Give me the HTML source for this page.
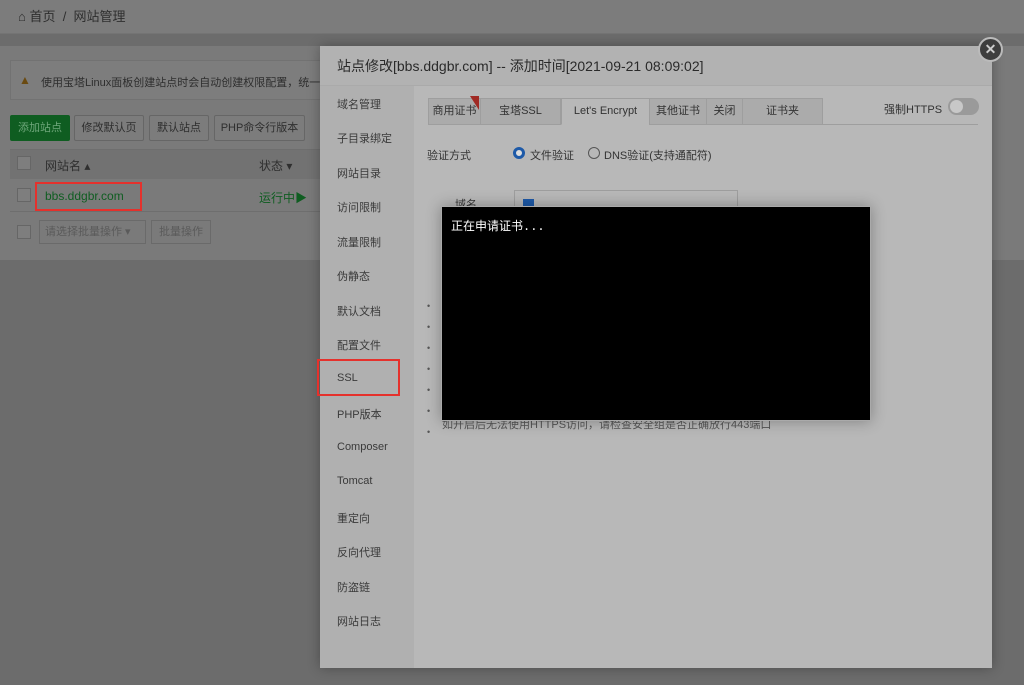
<!DOCTYPE html>
<html><head><meta charset="utf-8"><style>
*{margin:0;padding:0;box-sizing:border-box}
body{width:1024px;height:685px;background:#6c6c6c;font-family:"Liberation Sans","Noto Sans CJK SC",sans-serif;font-size:12px;color:#333;position:relative;overflow:hidden}
.a{position:absolute;white-space:nowrap}
.top{left:0;top:0;width:1024px;height:34px;background:#7c7c7c;border-bottom:1px solid #747474}
.panel{left:0;top:46px;width:1024px;height:214px;background:#7a7a7a}
.btn{position:absolute;top:115px;height:26px;border:1px solid #666;background:#7c7c7c;color:#2e2e2e;line-height:24px;text-align:center;border-radius:2px;font-size:11px}
.modal{left:320px;top:46px;width:672px;height:622px;background:#b8b8b8;box-shadow:0 0 12px rgba(0,0,0,.3)}
.hdr{left:0;top:0;width:672px;height:40px;background:#b2b2b2;font-size:14px;color:#2a2a2a;line-height:40px;padding-left:17px;border-bottom:1px solid #aaa}
.side{left:0;top:40px;width:94px;height:582px;background:#b0b0b0}
.side div{position:absolute;left:17px;color:#3a3a3a;font-size:11px}
.tab{position:absolute;top:52px;height:27px;border:1px solid #9e9e9e;background:#ababab;line-height:25px;text-align:center;color:#333;font-size:11px;white-space:nowrap}
</style></head><body>
<div class="a top"><span class="a" style="left:18px;top:6px;font-size:13px;color:#2e2e2e">⌂ 首页 &nbsp;/&nbsp; 网站管理</span></div>
<div class="a panel"></div>
<div class="a" style="left:10px;top:60px;width:330px;height:40px;border:1px solid #727272;background:#7d7d7d;overflow:hidden"><span class="a" style="left:8px;top:12px;color:#6a4a10">▲</span><span class="a" style="left:30px;top:13px;color:#2e2e2e;font-size:11px">使用宝塔Linux面板创建站点时会自动创建权限配置，统一使用</span></div>
<div class="btn" style="left:10px;width:60px;background:#0f5d21;color:#6fa77b;border-color:#0f5d21">添加站点</div>
<div class="btn" style="left:74px;width:70px">修改默认页</div>
<div class="btn" style="left:149px;width:60px">默认站点</div>
<div class="btn" style="left:214px;width:91px">PHP命令行版本</div>
<div class="a" style="left:10px;top:149px;width:320px;height:30px;background:#727272;border-top:1px solid #6e6e6e"></div>
<div class="a" style="left:17px;top:156px;width:14px;height:14px;border:1px solid #666;background:#7e7e7e"></div>
<span class="a" style="left:45px;top:157px;color:#2f2f2f">网站名 ▴</span>
<span class="a" style="left:259px;top:157px;color:#2f2f2f">状态 ▾</span>
<div class="a" style="left:17px;top:188px;width:14px;height:14px;border:1px solid #666;background:#7e7e7e"></div>
<div class="a" style="left:35px;top:182px;width:107px;height:29px;border:2px solid #e5312c"></div>
<span class="a" style="left:45px;top:189px;color:#0f5d21;font-size:12px">bbs.ddgbr.com</span>
<span class="a" style="left:259px;top:189px;color:#0f5d21">运行中▶</span>
<div class="a" style="left:10px;top:211px;width:320px;height:1px;background:#6e6e6e"></div>
<div class="a" style="left:17px;top:225px;width:14px;height:14px;border:1px solid #666;background:#7e7e7e"></div>
<div class="a" style="left:39px;top:220px;width:107px;height:24px;border:1px solid #6a6a6a;color:#5a5a5a;line-height:22px;padding-left:5px;font-size:11px">请选择批量操作 ▾</div>
<div class="a" style="left:151px;top:220px;width:60px;height:24px;border:1px solid #6a6a6a;color:#5a5a5a;line-height:22px;text-align:center;font-size:11px">批量操作</div>

<div class="a modal">
<div class="a hdr">站点修改[bbs.ddgbr.com] -- 添加时间[2021-09-21 08:09:02]</div>
<div class="a side">
<div style="top:10px">域名管理</div><div style="top:44px">子目录绑定</div><div style="top:79px">网站目录</div><div style="top:113px">访问限制</div><div style="top:148px">流量限制</div><div style="top:182px">伪静态</div><div style="top:217px">默认文档</div><div style="top:251px">配置文件</div><div style="top:286px">SSL</div><div style="top:320px">PHP版本</div><div style="top:355px">Composer</div><div style="top:389px">Tomcat</div><div style="top:424px">重定向</div><div style="top:458px">反向代理</div><div style="top:493px">防盗链</div><div style="top:527px">网站日志</div>
</div>
<div class="a" style="left:-3px;top:313px;width:83px;height:37px;border:2px solid #e5312c"></div>
<div class="a" style="left:108px;top:78px;width:550px;height:1px;background:#9e9e9e"></div>
<div class="tab" style="left:108px;width:53px">商用证书</div>
<div class="a" style="left:150px;top:50px;width:0;height:0;border-left:9px solid transparent;border-top:14px solid #a02a24"></div>
<div class="tab" style="left:160px;width:81px">宝塔SSL</div>
<div class="tab" style="left:241px;width:89px;background:#b8b8b8;border-bottom-color:#b8b8b8">Let's Encrypt</div>
<div class="tab" style="left:329px;width:58px">其他证书</div>
<div class="tab" style="left:386px;width:37px">关闭</div>
<div class="tab" style="left:422px;width:81px">证书夹</div>
<span class="a" style="left:564px;top:55px;color:#333;font-size:11px">强制HTTPS</span>
<div class="a" style="left:628px;top:52px;width:31px;height:17px;border-radius:9px;background:#9a9a9a"><div class="a" style="left:2px;top:2px;width:13px;height:13px;border-radius:50%;background:#c8c8c8"></div></div>
<span class="a" style="left:107px;top:101px;font-size:11px">验证方式</span>
<div class="a" style="left:193px;top:101px;width:12px;height:12px;border-radius:50%;border:3px solid #1e5aa8;background:#ddd"></div>
<span class="a" style="left:210px;top:101px;font-size:11px">文件验证</span>
<div class="a" style="left:268px;top:101px;width:12px;height:12px;border-radius:50%;border:1px solid #555"></div>
<span class="a" style="left:284px;top:101px;font-size:11px">DNS验证(支持通配符)</span>
<span class="a" style="left:135px;top:150px;font-size:11px">域名</span>
<div class="a" style="left:194px;top:144px;width:224px;height:40px;border:1px solid #9e9e9e;background:#b8b8b8"><div class="a" style="left:8px;top:8px;width:11px;height:11px;background:#1e5aa8"></div></div>
<div class="a" style="left:107px;top:250px;color:#555;line-height:21px;font-size:9px;white-space:normal">•<br>•<br>•<br>•<br>•<br>•<br>•</div>
<span class="a" style="left:122px;top:370px;color:#555;font-size:11px">如开启后无法使用HTTPS访问，请检查安全组是否正确放行443端口</span>
</div>
<div class="a" style="left:441px;top:206px;width:430px;height:215px;background:#000;border:1px solid #aaa;box-shadow:0 0 14px rgba(0,0,0,.3)"><span class="a" style="left:9px;top:10px;color:#fff;font-family:'Liberation Mono','Noto Sans CJK SC',monospace;font-size:12px">正在申请证书...</span></div>
<div class="a" style="left:978px;top:37px;width:25px;height:25px;border-radius:50%;background:#3e3e3e;border:2px solid #bbb;color:#ccc;text-align:center;line-height:20px;font-size:14px;font-weight:bold">✕</div>
</body></html>
